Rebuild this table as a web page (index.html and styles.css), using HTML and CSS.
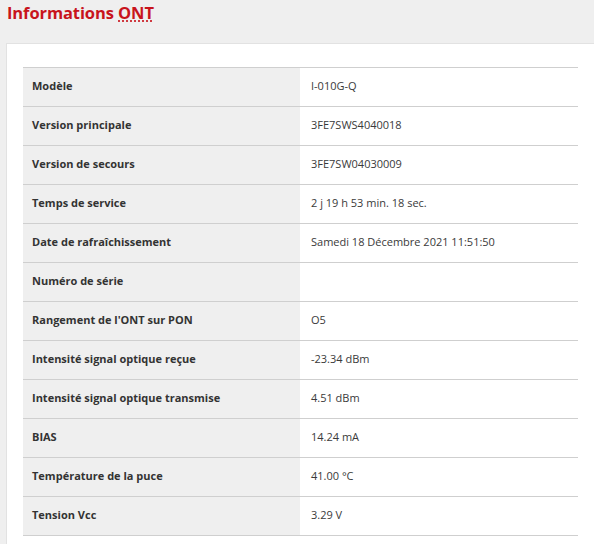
FILE: index.html
```html
<!DOCTYPE html>
<html lang="fr">
<head>
<meta charset="utf-8">
<title>Informations ONT</title>
<link rel="stylesheet" href="styles.css">
</head>
<body>
<h1 class="title">Informations <abbr class="abbr" title="Optical Network Terminal">ONT</abbr></h1>
<div class="panel">
  <table class="info">
    <tr><th>Modèle</th><td>I-010G-Q</td></tr>
    <tr><th>Version principale</th><td>3FE7SWS4040018</td></tr>
    <tr><th>Version de secours</th><td>3FE7SW04030009</td></tr>
    <tr><th>Temps de service</th><td>2 j 19 h 53 min. 18 sec.</td></tr>
    <tr><th>Date de rafraîchissement</th><td>Samedi 18 Décembre 2021 11:51:50</td></tr>
    <tr><th>Numéro de série</th><td></td></tr>
    <tr><th>Rangement de l'ONT sur PON</th><td>O5</td></tr>
    <tr><th>Intensité signal optique reçue</th><td>-23.34 dBm</td></tr>
    <tr><th>Intensité signal optique transmise</th><td>4.51 dBm</td></tr>
    <tr><th>BIAS</th><td>14.24 mA</td></tr>
    <tr><th>Température de la puce</th><td>41.00 °C</td></tr>
    <tr><th>Tension Vcc</th><td>3.29 V</td></tr>
  </table>
</div>
</body>
</html>
```

FILE: styles.css
```css
html, body {
  margin: 0;
  padding: 0;
  background: #efefef;
  font-family: "Open Sans", "Liberation Sans", sans-serif;
  color: #333;
  overflow: hidden;
}
.title {
  margin: 0;
  padding: 3px 0 0 7px;
  height: 39px;
  box-sizing: border-box;
  font-size: 16.5px;
  font-weight: 700;
  color: #c8141c;
  line-height: 20px;
  letter-spacing: -0.1px;
}
.abbr {
  text-decoration: underline dotted;
  text-underline-offset: 2px;
}
.panel {
  margin-left: 6px;
  margin-top: 4px;
  background: #fff;
  border-left: 1px solid #e2e2e2;
  border-top: 1px solid #e2e2e2;
  padding: 23px 16px 30px 16px;
}
.info {
  border-collapse: collapse;
  width: 555px;
  font-size: 11px;
}
.info tr {
  border-top: 1px solid #cfcfcf;
  border-bottom: 1px solid #cfcfcf;
}
.info th, .info td {
  box-sizing: border-box;
  height: 39px;
  padding-top: 0;
  padding-bottom: 3px;
  text-align: left;
  vertical-align: middle;
}
.info th {
  width: 277px;
  background: #efefef;
  padding-left: 9px;
  font-weight: 700;
  color: #333;
}
.info td {
  padding-left: 11px;
  font-weight: 400;
  color: #3a3a3a;
}
```
